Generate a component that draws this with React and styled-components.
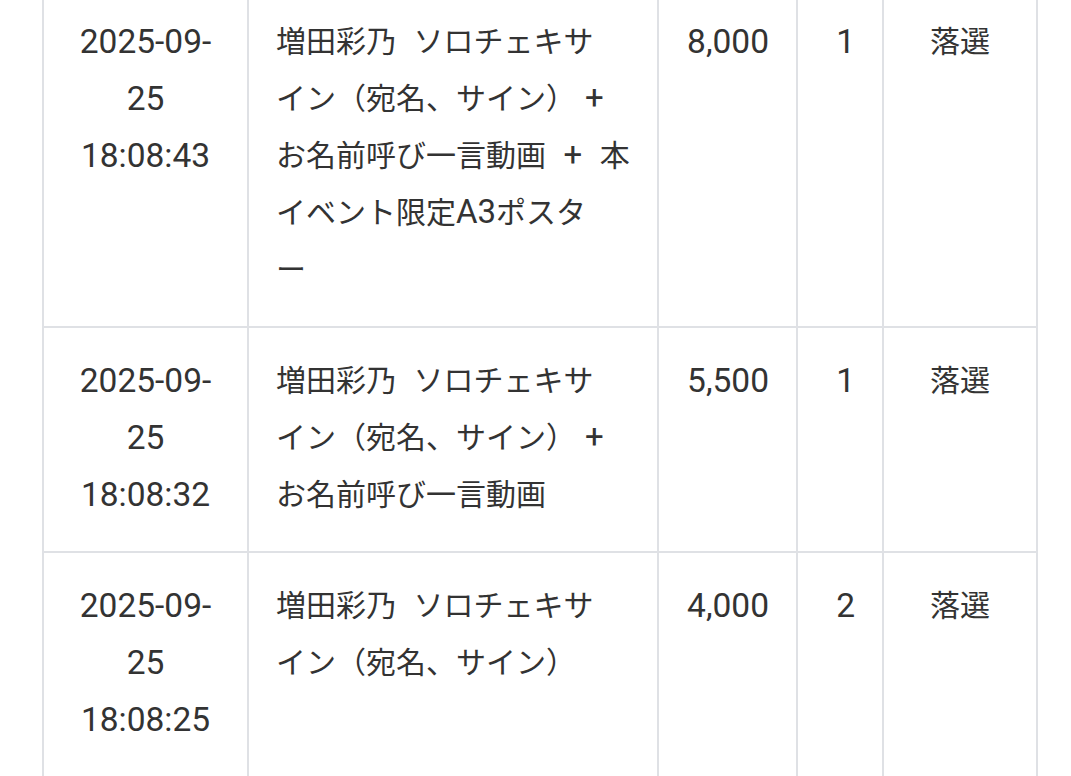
import React from "react";
import styled, { createGlobalStyle } from "styled-components";

const GlobalStyle = createGlobalStyle`
  html, body {
    margin: 0;
    padding: 0;
    background: #ffffff;
  }
  body {
    font-family: Roboto, "Noto Sans CJK JP", sans-serif;
    color: #333333;
    overflow: hidden;
  }
`;

const Page = styled.div`
  width: 1071px;
  height: 776px;
  overflow: hidden;
  background: #ffffff;
  padding-left: 42px;
  box-sizing: border-box;
`;

const Table = styled.table`
  border-collapse: collapse;
  table-layout: fixed;
  width: 996px;
  margin-top: -13px;
`;

const Cell = styled.td`
  border: 2px solid #dfe1e5;
  padding: 24px 27px 28px;
  line-height: 57px;
  vertical-align: top;
  font-size: ${(p) => (p.$cjk ? "30px" : "33.5px")};
  text-align: ${(p) => p.$align || "left"};
  white-space: ${(p) => (p.$nowrap ? "nowrap" : "normal")};
  word-spacing: ${(p) => (p.$cjk ? "10px" : "normal")};
`;

// latin bits inside the japanese text render a little larger
const Lat = styled.span`
  font-size: 33px;
  line-height: 1;
  margin-left: ${(p) => (p.$gap ? "9px" : "0")};
`;

const orders = [
  {
    date: "2025-09-",
    rest: "25 18:08:43",
    item: [
      <>増田彩乃 ソロチェキサ</>,
      <>イン（宛名、サイン）<Lat $gap>+</Lat></>,
      <>お名前呼び一言動画 <Lat>+</Lat> 本</>,
      <>イベント限定<Lat>A3</Lat>ポスタ</>,
      <>ー</>,
    ],
    price: "8,000",
    qty: 1,
    status: "落選",
  },
  {
    date: "2025-09-",
    rest: "25 18:08:32",
    item: [
      <>増田彩乃 ソロチェキサ</>,
      <>イン（宛名、サイン）<Lat $gap>+</Lat></>,
      <>お名前呼び一言動画</>,
    ],
    price: "5,500",
    qty: 1,
    status: "落選",
  },
  {
    date: "2025-09-",
    rest: "25 18:08:25",
    item: [<>増田彩乃 ソロチェキサ</>, <>イン（宛名、サイン）</>],
    price: "4,000",
    qty: 2,
    status: "落選",
  },
];

export default function App() {
  return (
    <Page>
      <GlobalStyle />
      <Table>
        <colgroup>
          <col style={{ width: 205 }} />
          <col style={{ width: 410 }} />
          <col style={{ width: 139 }} />
          <col style={{ width: 86 }} />
          <col style={{ width: 154 }} />
        </colgroup>
        <tbody>
          {orders.map((o, i) => (
            <tr key={i}>
              <Cell $align="center">
                {o.date}
                <wbr />
                {o.rest}
              </Cell>
              <Cell $cjk $nowrap>
                {o.item.map((line, j) => (
                  <React.Fragment key={j}>
                    {j > 0 && <br />}
                    {line}
                  </React.Fragment>
                ))}
              </Cell>
              <Cell $align="right">{o.price}</Cell>
              <Cell $align="right">{o.qty}</Cell>
              <Cell $cjk $align="center">
                {o.status}
              </Cell>
            </tr>
          ))}
        </tbody>
      </Table>
    </Page>
  );
}
